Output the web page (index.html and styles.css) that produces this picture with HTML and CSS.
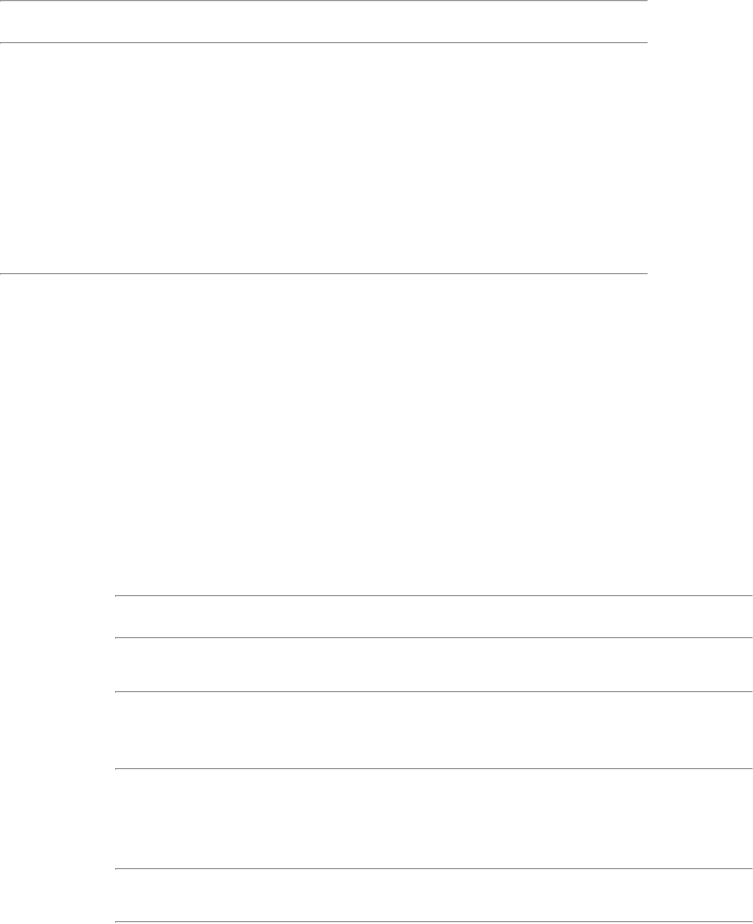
FILE: index.html
```html
<!DOCTYPE html>
<html lang="en">

<head>
    <meta charset="UTF-8">
    <meta name="viewport" content="width=device-width, initial-scale=1.0">
    <title>Sheet</title>
    <link rel="stylesheet" href="styles.css">
</head>

<body>
    <section class="panel panel-top">
        <hr>
        <div class="row row-40"></div>
        <hr>
        <div class="row row-229"></div>
        <hr>
    </section>
    <div class="spacer"></div>
    <section class="panel panel-bottom">
        <hr>
        <div class="row row-40"></div>
        <hr>
        <div class="row row-52"></div>
        <hr>
        <div class="row row-75"></div>
        <hr>
        <div class="row row-98"></div>
        <hr>
        <div class="row row-51"></div>
        <hr>
    </section>
</body>

</html>
```

FILE: styles.css
```css
body {
    font-family: "Liberation Sans", Arial, sans-serif;
    margin: 0;
    padding: 0;
    background-color: #ffffff;
}

hr {
    margin: 0;
}

.panel-top {
    width: 648px;
}

.panel-bottom {
    width: 638px;
    margin-left: 115px;
}

.spacer {
    height: 320px;
}

.row-40 {
    height: 40px;
}

.row-229 {
    height: 229px;
}

.row-52 {
    height: 52px;
}

.row-75 {
    height: 75px;
}

.row-98 {
    height: 98px;
}

.row-51 {
    height: 51px;
}
```
